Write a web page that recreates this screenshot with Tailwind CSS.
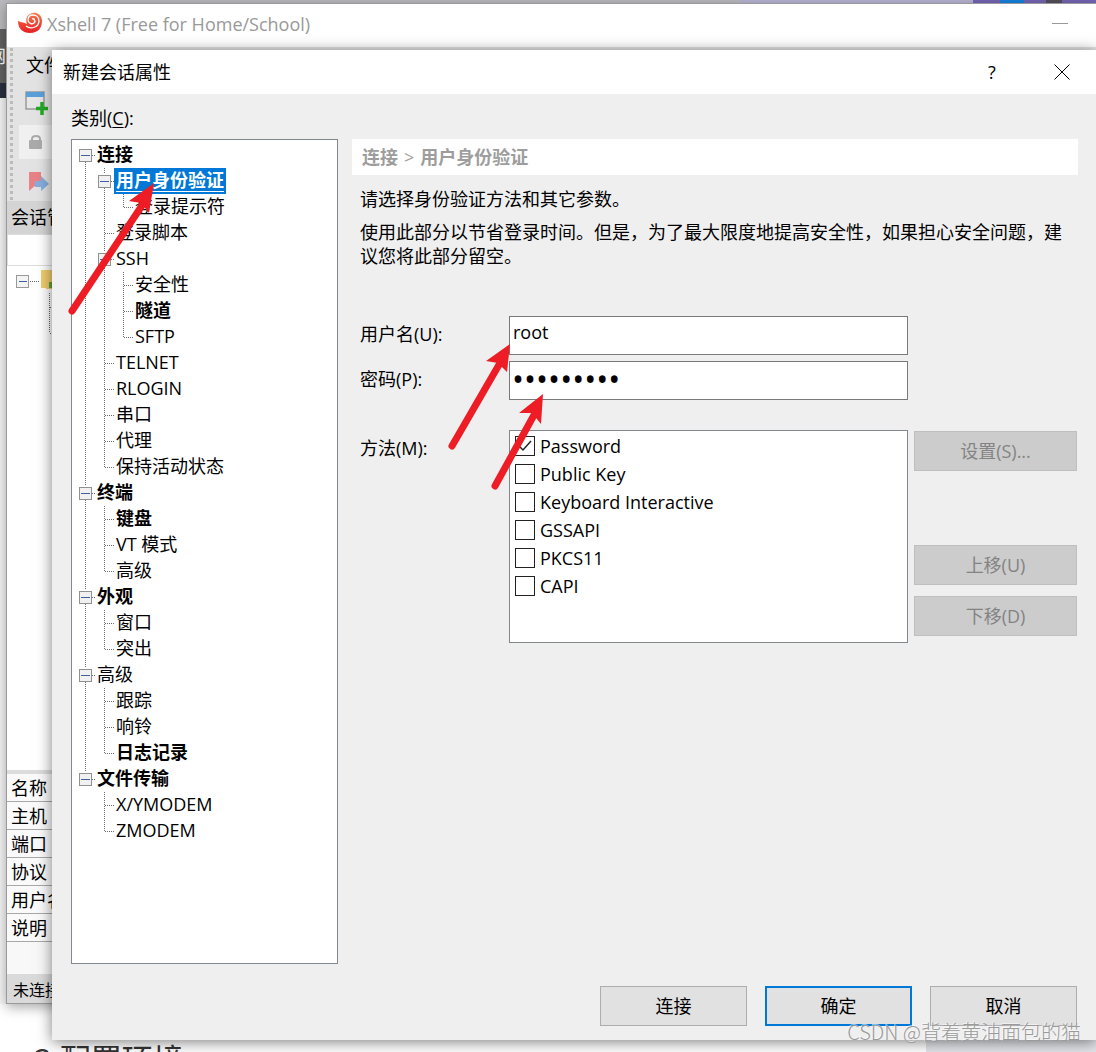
<!DOCTYPE html>
<html lang="zh-CN">
<head>
<meta charset="utf-8">
<title>新建会话属性</title>
<script src="https://cdn.jsdelivr.net/npm/@tailwindcss/browser@4"></script>
</head>
<body class="bg-white text-black text-lg leading-6 font-['Open_Sans','Noto_Sans_CJK_SC',sans-serif]">
<div class="relative grid min-h-screen overflow-hidden">

  <!-- page behind the windows -->
  <div class="col-start-1 row-start-1 flex flex-col overflow-hidden" aria-hidden="true">
    <div class="flex h-[29px] shrink-0 justify-end bg-[#bcbcc0]">
      <div class="h-[3px] w-[233px] bg-[#b9b6d6]"></div>
      <div class="h-[3px] w-[27px] bg-[#7565b5]"></div>
      <div class="h-[3px] w-[24px] bg-[#1583e0]"></div>
      <div class="h-[3px] w-[22px] bg-[#7565b5]"></div>
      <div class="h-[3px] w-[16px] bg-[#54505a]"></div>
      <div class="h-[3px] w-[34px] bg-[#7565b5]"></div>
    </div>
    <div class="flex h-[54px] shrink-0 items-center bg-[#626262] text-white">
      <div class="flex w-[6px] justify-end overflow-hidden"><span>网</span></div>
    </div>
    <div class="h-[15px] shrink-0 bg-[#2b3040]"></div>
    <div class="h-[906px] shrink-0 bg-[#f7f7f8]"></div>
    <div class="flex grow bg-white">
      <div class="h-0 grow pt-[35px] pl-[34px] text-[31px] leading-10 text-[#333]">2 配置环境</div>
      <div class="w-[170px] bg-[#e3e4e9]"></div>
    </div>
  </div>

  <!-- Xshell main window -->
  <section class="col-start-1 row-start-1 mt-[3px] mb-[48px] ml-[6px] flex flex-col border-t border-b border-l border-[#9a9a9e] bg-white shadow-[0_3px_12px_rgba(0,0,0,0.35)]">
    <header class="flex h-[43px] shrink-0 items-center bg-white pb-1 pl-[10px] text-[#999]">
      <svg class="mr-[5px] size-[25px]" viewBox="0 0 25 25" aria-hidden="true">
        <defs><linearGradient id="shell" x1="0" y1="0" x2="0" y2="1"><stop offset="0" stop-color="#f47a4c"/><stop offset="1" stop-color="#e61e25"/></linearGradient></defs>
        <path fill="url(#shell)" d="M1 10c4 2 6 1 9 3-2-5 0-10 6-11 5-1 9 3 9 8 0 7-4 12-12 12C6 22 1 18 1 10z"/>
        <path fill="none" stroke="#fff" stroke-width="1.300" d="M9 15c5 4 13 1 13-5 0-4-3-6-6-6s-5 2-5 5 4 5 6 3 0-5-2-4"/>
      </svg>
      <h1 class="grow">Xshell 7 (Free for Home/School)</h1>
      <button class="mr-7 h-5 w-4" aria-label="最小化"><span class="block h-px w-full bg-[#999]"></span></button>
    </header>
    <div class="flex h-[154px] shrink-0 bg-[#e3e3e3]">
      <div class="my-px ml-[3px] w-[3px] border-l-[3px] border-dotted border-[#bbb]"></div>
      <div class="flex flex-col">
        <div class="flex h-9 items-center pl-[13px] whitespace-nowrap">文件(F)</div>
        <svg class="ml-[11px] mt-1 h-7 w-7" viewBox="0 0 28 28" aria-hidden="true">
          <rect x="2" y="5" width="18" height="17" fill="#e6e6e6" stroke="#9a9a9a" stroke-width="1.500"/><path d="M2 5h18v5H2z" fill="#5b9fda"/><path d="M18 15v13M12 21.500h12" stroke="#22aa22" stroke-width="3.500"/>
        </svg>
        <div class="mt-[10px] ml-[6px] flex h-[34px] w-20 items-center bg-[#f0f0f0] pl-[9px]">
          <svg class="size-4" viewBox="0 0 16 16" aria-hidden="true"><path d="M4 8V5q0-3 4-3t4 3v3" fill="none" stroke="#aaa" stroke-width="2"/><rect x="1" y="6" width="13" height="9" rx="1" fill="#aaa"/></svg>
        </div>
        <svg class="mt-3 ml-4 size-5" viewBox="0 0 20 20" aria-hidden="true"><path d="M0 1h12v12H8l-8 7z" fill="#e98284"/><path d="M6 10h6V5l8 8-8 7v-4H6z" fill="#85aede"/></svg>
      </div>
    </div>
    <div class="h-[33px] shrink-0 bg-[#d4d4d4] pt-1 pl-1 leading-6">会话管理器</div>
    <div class="h-8 shrink-0 border border-[#ddd] bg-white"></div>
    <div class="flex grow items-start border-b-4 border-[#dcdcdc] bg-white pt-1">
      <svg class="h-[70px] w-[60px]" viewBox="0 0 60 70" shape-rendering="crispEdges" aria-hidden="true">
        <rect x="9.500" y="5.500" width="12" height="12" rx="1" fill="#f4f4f4" stroke="#999"/><path d="M12 11.500h8" stroke="#3f5fa8"/>
        <path d="M23 11.500h9M42.500 23v40M43 37.500h10M43 63.500h10" stroke="#666" stroke-dasharray="1 1"/>
        <path d="M34 0h18v20l-18-2z" fill="#f1cd6e"/><path d="M42 15h8" stroke="#69a33a" stroke-width="6"/>
      </svg>
    </div>
    <dl class="shrink-0 bg-[#fafafa] *:h-7 *:border-b *:border-[#a8a8a8] *:pl-1 *:leading-7">
      <dt>名称</dt><dt>主机</dt><dt>端口</dt><dt>协议</dt><dt>用户名</dt><dt>说明</dt>
    </dl>
    <div class="h-8 shrink-0 bg-[#f8f8f8]"></div>
    <footer class="h-[29px] shrink-0 bg-[#dadada] pt-[2px] pl-[6px] text-base leading-7">未连接</footer>
  </section>

  <!-- session properties dialog -->
  <form class="relative col-start-1 row-start-1 mt-[50px] mb-[12px] ml-[52px] flex flex-col bg-[#efefef] shadow-[0_2px_14px_rgba(0,0,0,0.5)]" onsubmit="return false">
    <header class="flex h-11 shrink-0 items-center bg-white pl-[11px]">
      <h2 class="grow">新建会话属性</h2>
      <button type="button" class="mr-[52px] w-5 text-center" aria-label="帮助">?</button>
      <button type="button" class="mr-[26px]" aria-label="关闭"><svg class="size-4" viewBox="0 0 16 16"><path d="M.5.5l15 15M15.500.5l-15 15" stroke="#000" stroke-width="1"/></svg></button>
    </header>
    <div class="flex grow flex-col pr-[18px] pl-[19px]">
      <div id="cat" class="h-[45px] pt-3">类别(<span class="underline underline-offset-2">C</span>):</div>
      <div class="flex grow gap-[14px]">
        <ul id="tree" role="tree" aria-labelledby="cat" class="w-[267px] shrink-0 border border-[#828790] bg-white pt-[2px] pl-1"></ul>
        <main class="min-w-0 grow">
          <h3 class="flex h-9 items-center gap-[6px] bg-white pl-[10px] font-bold text-[#9d9d9d]"><span>连接</span><span class="font-normal">&gt;</span><span>用户身份验证</span></h3>
          <div class="pl-2">
            <p class="mt-3">请选择身份验证方法和其它参数。</p>
            <p class="mt-[9px]">使用此部分以节省登录时间。但是，为了最大限度地提高安全性，如果担心安全问题，建议您将此部分留空。</p>
            <div class="mt-12 grid grid-cols-[149px_1fr_170px] gap-y-[6px]">
              <label for="user" class="pt-[6px]">用户名(U):</label>
              <input id="user" type="text" value="root" class="h-[39px] min-w-0 border border-[#7a7a7a] bg-white pb-2 pl-[3px] outline-none">
              <span></span>
              <label for="pass" class="pt-[6px]">密码(P):</label>
              <input id="pass" type="password" value="123456789" class="h-[39px] min-w-0 border border-[#7a7a7a] bg-white pb-1 pl-[2px] text-[32px] outline-none">
              <span></span>
              <div id="method-label" class="mt-6 pt-[6px]">方法(M):</div>
              <div class="mt-6 h-[213px] border border-[#828790] bg-white pt-px pl-[5px]" id="methods" role="group" aria-labelledby="method-label"></div>
              <div class="mt-[25px] flex flex-col pr-px pl-[6px] text-[#838383]">
                <button type="button" disabled class="h-10 border border-[#bfbfbf] bg-[#ccc]">设置(S)...</button>
                <button type="button" disabled class="mt-[74px] h-10 border border-[#bfbfbf] bg-[#ccc]">上移(U)</button>
                <button type="button" disabled class="mt-[11px] h-10 border border-[#bfbfbf] bg-[#ccc]">下移(D)</button>
              </div>
            </div>
          </div>
        </main>
      </div>
      <footer class="mt-[22px] mb-[14px] flex justify-end gap-[18px] pr-px">
        <button type="button" class="h-10 w-[147px] border border-[#adadad] bg-[#e1e1e1]">连接</button>
        <button type="submit" class="h-10 w-[147px] border-2 border-[#0078d7] bg-[#e1e1e1]">确定</button>
        <button type="button" class="h-10 w-[147px] border border-[#adadad] bg-[#e1e1e1]">取消</button>
      </footer>
    </div>
  </form>

  <!-- annotation arrows -->
  <svg class="pointer-events-none absolute top-0 left-0 h-[500px] w-[560px]" viewBox="0 0 560 500" fill="#ee1c24" stroke="#ee1c24" stroke-linecap="round" aria-hidden="true">
    <path d="M72 311L143 204M452 446L500 363M495 486L534 415" stroke-width="7"/>
    <path stroke="none" d="M154 183L129 201L141 203L149 213zM510 344L486 361L498 363L507 372zM543 394L519 413L532 413L541 424z"/>
  </svg>
  <div class="absolute right-[15px] bottom-2 text-xl leading-6 font-light text-[#9a9a9a] font-['Noto_Sans_CJK_SC',sans-serif] [text-shadow:-1px_-1px_0_#fff8]">CSDN @背着黄油面包的猫</div>
</div>

<script>
  // Guide cells: "|" line, "+" tee, "L" last child, "_" blank,
  // "r" first root, "x" middle node, "e" last root (nodes carry an expander box).
  const guides = {
    '|': 'M9.500 0v26', '+': 'M9.500 0v26M10 13.500h9', 'L': 'M9.500 0v13M10 13.500h9', '_': '',
    'r': 'M9.500 20v6M16 13.500h3', 'x': 'M9.500 0v6M9.500 20v6M16 13.500h3', 'e': 'M9.500 0v6M16 13.500h3'
  };
  const rows = [
    ['r', '连接', 1], ['|x', '用户身份验证', 1, 1], ['||L', '登录提示符'], ['|+', '登录脚本'], ['|x', 'SSH'],
    ['||+', '安全性'], ['||+', '隧道', 1], ['||L', 'SFTP'], ['|+', 'TELNET'], ['|+', 'RLOGIN'], ['|+', '串口'],
    ['|+', '代理'], ['|L', '保持活动状态'], ['x', '终端', 1], ['|+', '键盘', 1], ['|+', 'VT 模式'], ['|L', '高级'],
    ['x', '外观', 1], ['|+', '窗口'], ['|L', '突出'], ['x', '高级'], ['|+', '跟踪'], ['|+', '响铃'], ['|L', '日志记录', 1],
    ['e', '文件传输', 1], ['_+', 'X/YMODEM'], ['_L', 'ZMODEM']
  ];
  const cell = c => `<svg class="h-[26px] w-[19px] shrink-0" viewBox="0 0 19 26" shape-rendering="crispEdges" aria-hidden="true">
    <path d="${guides[c]}" stroke="#6d6d6d" stroke-dasharray="1 1"/>${'rxe'.includes(c)
      ? '<rect x="3.500" y="7.500" width="12" height="12" fill="#f1f1f1" stroke="#919191"/><path d="M5 13.500h9" stroke="#3f5fa8"/>' : ''}</svg>`;
  document.getElementById('tree').innerHTML = rows.map(([g, name, bold, sel]) =>
    `<li role="treeitem" aria-level="${g.length}" class="flex h-[26px] items-start">${[...g].map(cell).join('')}<span class="leading-6 ${
      sel ? 'h-[26px] bg-[#0078d7] px-[2px] text-white underline underline-offset-4 decoration-1' : 'pl-[2px]'} ${bold ? 'font-bold' : ''}">${name}</span></li>`).join('');

  document.getElementById('methods').innerHTML =
    ['Password', 'Public Key', 'Keyboard Interactive', 'GSSAPI', 'PKCS11', 'CAPI'].map((m, i) =>
      `<label class="flex h-7 items-center gap-[5px]"><span class="relative size-5">
        <input type="checkbox" ${i ? '' : 'checked'} class="peer block size-5 appearance-none border border-[#222] bg-white">
        <svg class="pointer-events-none absolute inset-0 hidden peer-checked:block" viewBox="0 0 20 20"><path d="M4 10l4 4 8-9" fill="none" stroke="#222" stroke-width="1.500"/></svg>
      </span>${m}</label>`).join('');
</script>
</body>
</html>
